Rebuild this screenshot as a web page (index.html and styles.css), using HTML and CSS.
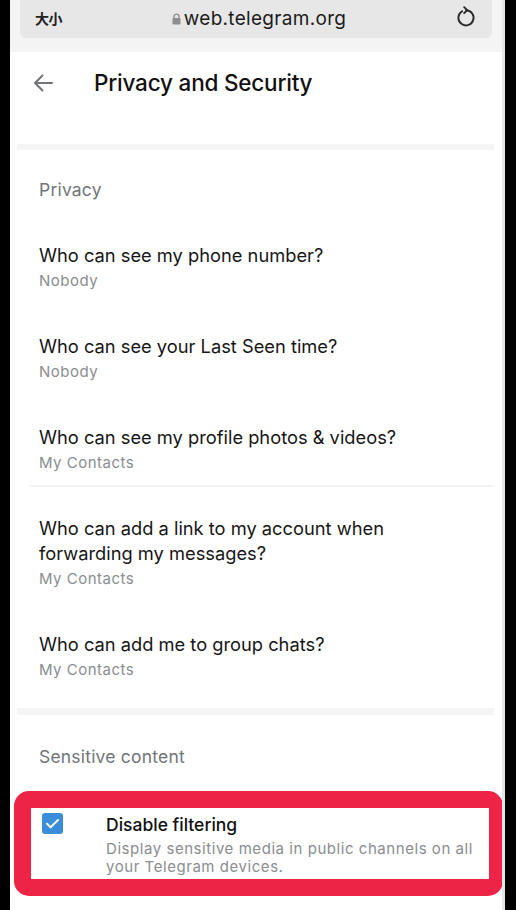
FILE: index.html
```html
<!DOCTYPE html>
<html lang="en">
<head>
<meta charset="utf-8">
<title>Privacy and Security</title>
<link rel="stylesheet" href="styles.css">
</head>
<body>
<div class="screen">
  <div class="browser">
    <div class="addr">
      <span class="textsize">大小</span>
      <span class="url">
        <svg class="lock" width="9" height="12" viewBox="0 0 9 12"><path d="M2 5V3.6a2.5 2.5 0 0 1 5 0V5" fill="none" stroke="#8e8e8e" stroke-width="1.4"/><rect x="0.5" y="5" width="8" height="6.5" rx="1.2" fill="#8e8e8e"/></svg>
        web.telegram.org
      </span>
      <svg class="reload" width="20" height="22" viewBox="0 0 20 22"><path d="M6.2 5.2A7.6 7.6 0 1 0 10 4.2" fill="none" stroke="#2a2a2a" stroke-width="1.9" stroke-linecap="round"/><path d="M8.2 1.2L11.2 4.2L8.2 7.2" fill="none" stroke="#2a2a2a" stroke-width="1.9" stroke-linecap="round" stroke-linejoin="round"/></svg>
    </div>
  </div>

  <div class="header">
    <svg class="back" width="20" height="18" viewBox="0 0 20 18"><path d="M19 9H2M9.5 1.5L2 9l7.5 7.5" fill="none" stroke="#707579" stroke-width="2" stroke-linecap="round" stroke-linejoin="round"/></svg>
    <h1 class="title">Privacy and Security</h1>
  </div>
  <div class="band band-top"></div>

  <div class="section-title first">Privacy</div>

  <div class="item">
    <div class="item-title">Who can see my phone number?</div>
    <div class="item-sub">Nobody</div>
  </div>
  <div class="item">
    <div class="item-title">Who can see your Last Seen time?</div>
    <div class="item-sub">Nobody</div>
  </div>
  <div class="item before-div">
    <div class="item-title">Who can see my profile photos &amp; videos?</div>
    <div class="item-sub">My Contacts</div>
  </div>
  <div class="divider"></div>
  <div class="item after-div">
    <div class="item-title">Who can add a link to my account when forwarding my messages?</div>
    <div class="item-sub">My Contacts</div>
  </div>
  <div class="item">
    <div class="item-title">Who can add me to group chats?</div>
    <div class="item-sub">My Contacts</div>
  </div>

  <div class="band band-mid"></div>

  <div class="section-title second">Sensitive content</div>

  <div class="check-row">
    <span class="checkbox">
      <svg width="21" height="21" viewBox="0 0 21 21"><path d="M5 10.8l3.6 3.4L16 7" fill="none" stroke="#fff" stroke-width="2" stroke-linecap="round" stroke-linejoin="round"/></svg>
    </span>
    <div class="check-text">
      <div class="check-title">Disable filtering</div>
      <div class="check-desc">Display sensitive media in public channels on all your Telegram devices.</div>
    </div>
    <div class="highlight"></div>
  </div>
</div>
</body>
</html>
```

FILE: styles.css
```css
* { box-sizing: border-box; }
html, body { margin: 0; padding: 0; }
body {
  background: #000;
  font-family: "Inter", "Roboto", "Noto Sans", sans-serif;
  width: 516px;
  height: 910px;
  overflow: hidden;
}
.screen {
  margin: 0 11px 0 10px;
  width: 495px;
  height: 910px;
  background: #fff;
  display: flex;
  flex-direction: column;
  overflow: hidden;
  border-right: 3px solid #e6e6e6;
}
.browser {
  background: #f4f4f4;
  height: 52px;
  padding: 0 10px;
}
.addr {
  height: 38px;
  background: #e7e7e7;
  border-radius: 0 0 6px 6px;
  display: flex;
  align-items: center;
  justify-content: space-between;
  padding: 0 16px 2px 15px;
}
.textsize {
  font-family: "Noto Sans CJK SC", sans-serif;
  font-weight: 700;
  font-size: 14px;
  color: #222;
  letter-spacing: -0.5px;
}
.url {
  font-size: 19px;
  color: #1c1c1c;
  display: flex;
  align-items: center;
  gap: 3px;
  letter-spacing: 0.3px;
}
.lock { margin-top: 1px; }
.reload { margin-top: -2px; }

.header {
  display: flex;
  align-items: center;
  padding: 17px 0 47px 23px;
}
.back { flex: none; }
.title {
  margin: 0 0 0 41px;
  font-size: 22.5px;
  line-height: 28px;
  font-weight: 500;
  color: #111;
  letter-spacing: -0.2px;
}
.band {
  height: 6px;
  background: #f5f5f6;
  margin: 0 8px 0 7px;
  flex: none;
}
.band-mid { margin-top: 6px; height: 7px; }

.section-title {
  font-size: 17.5px;
  line-height: 24px;
  color: #707579;
  padding: 28px 29px 20px;
  letter-spacing: 0.2px;
}
.section-title.second { padding: 30px 29px 20px; }

.item {
  padding: 21px 29px;
}
.item.before-div { padding-bottom: 11px; }
.item.after-div { padding-top: 29px; }
.divider {
  height: 2px;
  background: #f2f2f3;
  margin: 0 8px 0 20px;
  flex: none;
}
.item-title {
  font-size: 18.3px;
  line-height: 25px;
  color: #161616;
  max-width: 400px;
}
.item-sub {
  margin-top: 2px;
  font-size: 15px;
  line-height: 22px;
  color: #8a8d91;
  letter-spacing: 0.5px;
}

.check-row {
  position: relative;
  display: flex;
  align-items: flex-start;
  padding: 24px 14px 0 32px;
}
.checkbox {
  flex: none;
  width: 21px;
  height: 21px;
  background: #3a8dd8;
  border-radius: 3px;
  display: flex;
}
.check-text {
  margin-left: 43px;
  width: 375px;
}
.check-title {
  font-size: 17.5px;
  line-height: 24px;
  color: #111;
  font-weight: 500;
}
.check-desc {
  margin-top: 3px;
  font-size: 15px;
  line-height: 18px;
  color: #8a8d91;
  letter-spacing: 0.55px;
}
.highlight {
  position: absolute;
  left: 4px;
  top: 2px;
  width: 489px;
  height: 105px;
  border: 17px solid #ee2446;
  border-right-width: 14px;
  border-radius: 15px;
}
```
